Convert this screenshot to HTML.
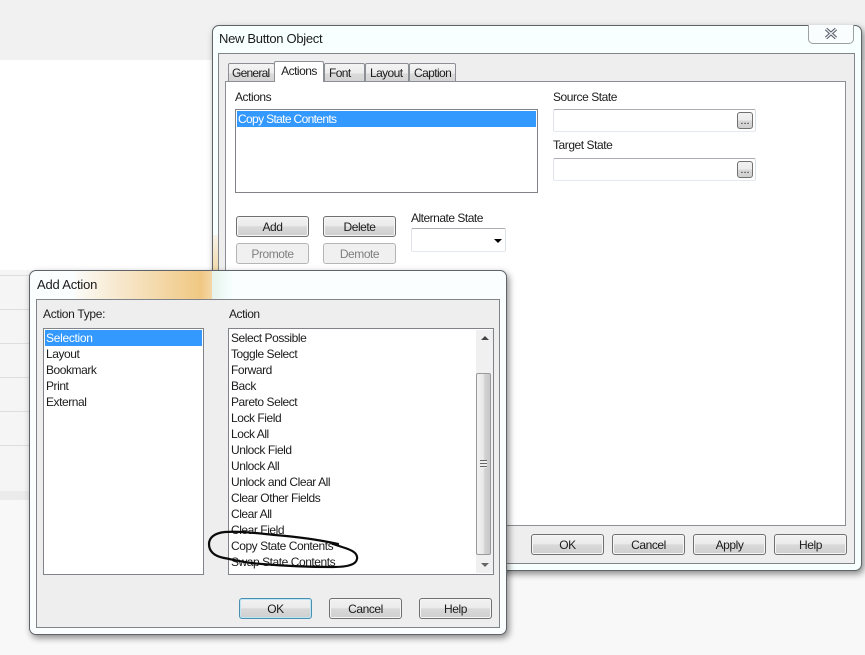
<!DOCTYPE html>
<html><head><meta charset="utf-8"><style>
html,body{margin:0;padding:0;width:865px;height:655px;overflow:hidden;background:#f8f8f8}
body{position:relative;font:12px/16px "Liberation Sans",sans-serif;color:#1c1c1c}
div,span{position:absolute;box-sizing:border-box}
.t{white-space:nowrap;letter-spacing:-.45px}
.win{border:1px solid #5f6468;border-radius:7px;background:#f7ffff;box-shadow:2px 3px 7px rgba(0,0,0,.45)}
.grp{background:#eee;border:1px solid #808488}
.btn{width:73px;height:21px;border:1px solid #707070;border-radius:3px;background:linear-gradient(#f2f2f2 0,#ebebeb 48%,#d9d9d9 50%,#cfcfcf 100%);text-align:center;line-height:21px;letter-spacing:-.45px;box-shadow:inset 0 0 0 1px #f6f6f6}
.dis{border-color:#b5b5b5;background:#f0f0f0;color:#7f7f7f;box-shadow:none}
.tab{height:19px;top:63px;border:1px solid #8c9094;border-bottom:0;border-radius:2px 2px 0 0;background:linear-gradient(#f4f4f4 0,#ededed 50%,#dadada 55%,#d4d4d4 100%);line-height:19px;padding-left:4px;letter-spacing:-.6px}
.list{background:#fff;border:1px solid #808488}
.sel{background:#3399ff;color:#fff;height:16px;line-height:16px;padding-left:1px;white-space:nowrap;letter-spacing:-.65px}
.fld{width:203px;height:23px;background:#fff;border:1px solid;border-color:#abadb3 #dbdfe6 #e3e9ef #e2e3ea;border-radius:2px}
.dots{width:16px;height:17px;border:1px solid #707070;border-radius:3px;background:linear-gradient(#f2f2f2,#ebebeb 48%,#d9d9d9 52%,#cfcfcf);text-align:center;line-height:17px;font-size:11px;color:#222}
.row{left:0;width:29px;height:1px;background:#dedede}
</style></head><body>

<div style="left:0;top:0;width:865px;height:60px;background:#f1f1f1"></div>
<div style="left:0;top:60px;width:212px;height:210px;background:#fff"></div>
<div style="left:0;top:270px;width:30px;height:221px;background:#f5f5f5"></div>
<div class="row" style="top:275px"></div>
<div class="row" style="top:309px"></div>
<div class="row" style="top:343px"></div>
<div class="row" style="top:377px"></div>
<div class="row" style="top:411px"></div>
<div class="row" style="top:445px"></div>
<div style="left:0;top:491px;width:30px;height:9px;background:#ebebeb"></div>
<div style="left:0;top:500px;width:30px;height:155px;background:#f8f8f8"></div>

<!-- Main window -->
<div class="win" style="left:212px;top:25px;width:650px;height:546px"></div>
<div style="left:213px;top:235px;width:5px;height:35px;background:linear-gradient(#f7f3ea,#f1d9ab)"></div>
<span class="t" style="left:219px;top:31px;font-size:13px;letter-spacing:-.3px">New Button Object</span>
<div style="left:808px;top:25px;width:46px;height:19px;border:1px solid #9aa0a4;border-top:0;border-radius:0 0 5px 5px;background:#f9fdfd">
<svg width="44" height="18" style="position:absolute;left:0;top:0"><path d="M17 4 L27 13 M27 4 L17 13" stroke="#555b66" stroke-width="3.2" fill="none"/><path d="M17 4 L27 13 M27 4 L17 13" stroke="#eef0f4" stroke-width="1.2" fill="none"/></svg>
</div>
<div class="grp" style="left:218px;top:53px;width:637px;height:511px"></div>
<div class="tab" style="left:228px;width:47px;padding-left:3px;letter-spacing:-.75px">General</div>
<div class="tab" style="left:324px;width:41px">Font</div>
<div class="tab" style="left:365px;width:44px">Layout</div>
<div class="tab" style="left:409px;width:47px">Caption</div>
<div style="left:225px;top:81px;width:621px;height:445px;background:#fff;border:1px solid #8c9094"></div>
<div style="left:274px;top:61px;width:50px;height:21px;background:#fff;border:1px solid #8c9094;border-bottom:0;border-radius:2px 2px 0 0;text-align:center;line-height:19px;letter-spacing:-.5px">Actions</div>

<span class="t" style="left:235px;top:89px">Actions</span>
<div class="list" style="left:235px;top:109px;width:303px;height:84px"></div>
<div class="sel" style="left:237px;top:111px;width:299px">Copy State Contents</div>

<div class="btn" style="left:236px;top:216px">Add</div>
<div class="btn" style="left:323px;top:216px">Delete</div>
<div class="btn dis" style="left:236px;top:243px">Promote</div>
<div class="btn dis" style="left:323px;top:243px">Demote</div>
<span class="t" style="left:411px;top:210px;letter-spacing:-.5px">Alternate State</span>
<div class="fld" style="left:411px;top:228px;width:95px;height:24px"></div>
<div style="left:494px;top:239px;width:0;height:0;border:4px solid transparent;border-top:4px solid #000;border-bottom:0"></div>

<span class="t" style="left:553px;top:89px">Source State</span>
<div class="fld" style="left:553px;top:109px"></div>
<div class="dots" style="left:737px;top:112px">...</div>
<span class="t" style="left:553px;top:137px">Target State</span>
<div class="fld" style="left:553px;top:158px"></div>
<div class="dots" style="left:737px;top:161px">...</div>

<div class="btn" style="left:531px;top:534px">OK</div>
<div class="btn" style="left:612px;top:534px">Cancel</div>
<div class="btn" style="left:693px;top:534px">Apply</div>
<div class="btn" style="left:774px;top:534px">Help</div>

<!-- Add Action -->
<div class="win" style="left:29px;top:270px;width:478px;height:365px;background:#fbfefe"></div>
<div style="left:75px;top:271px;width:137px;height:28px;background:linear-gradient(90deg,#fbfbf8,#f8ecd6 25%,#f0c883 92%,#f3d8a8)"></div>
<div style="left:212px;top:271px;width:20px;height:28px;background:linear-gradient(90deg,#e6f2ea,#f7ffff)"></div>
<span class="t" style="left:37px;top:277px;font-size:13px;letter-spacing:-.2px">Add Action</span>
<div class="grp" style="left:36px;top:299px;width:464px;height:329px"></div>
<span class="t" style="left:43px;top:306px;letter-spacing:-.3px">Action Type:</span>
<span class="t" style="left:229px;top:306px">Action</span>
<div class="list" style="left:43px;top:328px;width:161px;height:247px"></div>
<div class="sel" style="left:45px;top:330px;width:157px;letter-spacing:-.3px">Selection</div>
<span class="t" style="left:46px;top:346px">Layout</span>
<span class="t" style="left:46px;top:362px">Bookmark</span>
<span class="t" style="left:46px;top:378px">Print</span>
<span class="t" style="left:46px;top:394px">External</span>

<div class="list" style="left:228px;top:328px;width:266px;height:247px"></div>
<span class="t" style="left:231px;top:330px">Select Possible</span>
<span class="t" style="left:231px;top:346px">Toggle Select</span>
<span class="t" style="left:231px;top:362px">Forward</span>
<span class="t" style="left:231px;top:378px">Back</span>
<span class="t" style="left:231px;top:394px">Pareto Select</span>
<span class="t" style="left:231px;top:410px">Lock Field</span>
<span class="t" style="left:231px;top:426px">Lock All</span>
<span class="t" style="left:231px;top:442px">Unlock Field</span>
<span class="t" style="left:231px;top:458px">Unlock All</span>
<span class="t" style="left:231px;top:474px">Unlock and Clear All</span>
<span class="t" style="left:231px;top:490px">Clear Other Fields</span>
<span class="t" style="left:231px;top:506px">Clear All</span>
<span class="t" style="left:231px;top:522px">Clear Field</span>
<span class="t" style="left:231px;top:538px">Copy State Contents</span>
<span class="t" style="left:231px;top:554px">Swap State Contents</span>

<div style="left:476px;top:330px;width:17px;height:243px;background:#f0f0f0"></div>
<div style="left:481px;top:336px;width:0;height:0;border:4px solid transparent;border-bottom:4px solid #444;border-top:0"></div>
<div style="left:481px;top:563px;width:0;height:0;border:4px solid transparent;border-top:4px solid #666;border-bottom:0"></div>
<div style="left:476px;top:373px;width:15px;height:182px;border:1px solid #9a9a9a;border-radius:2px;background:linear-gradient(90deg,#f2f2f2,#e8e8e8 50%,#d2d2d2 60%,#c8c8c8)"></div>
<div style="left:480px;top:460px;width:7px;height:8px;background:repeating-linear-gradient(#666 0,#666 1px,#eee 1px,#eee 3px)"></div>

<div class="btn" style="left:239px;top:598px;border-color:#4b8fb0;box-shadow:inset 0 0 0 1px #bfe6f5">OK</div>
<div class="btn" style="left:329px;top:598px">Cancel</div>
<div class="btn" style="left:419px;top:598px">Help</div>

<svg width="865" height="655" style="position:absolute;left:0;top:0;pointer-events:none">
<path d="M338 544 C320 540 300 537 275 535 C255 533 240 531 225 532 C214 533 209 538 209 544 C209 551 214 556 224 558 C235 560 245 563 262 564 C285 566 310 567 333 567 C347 567 356 565 357 559 C358 553 352 550 342 547 L333 544" fill="none" stroke="#0a0a0a" stroke-width="2.2" stroke-linecap="round"/>
</svg>
</body></html>
